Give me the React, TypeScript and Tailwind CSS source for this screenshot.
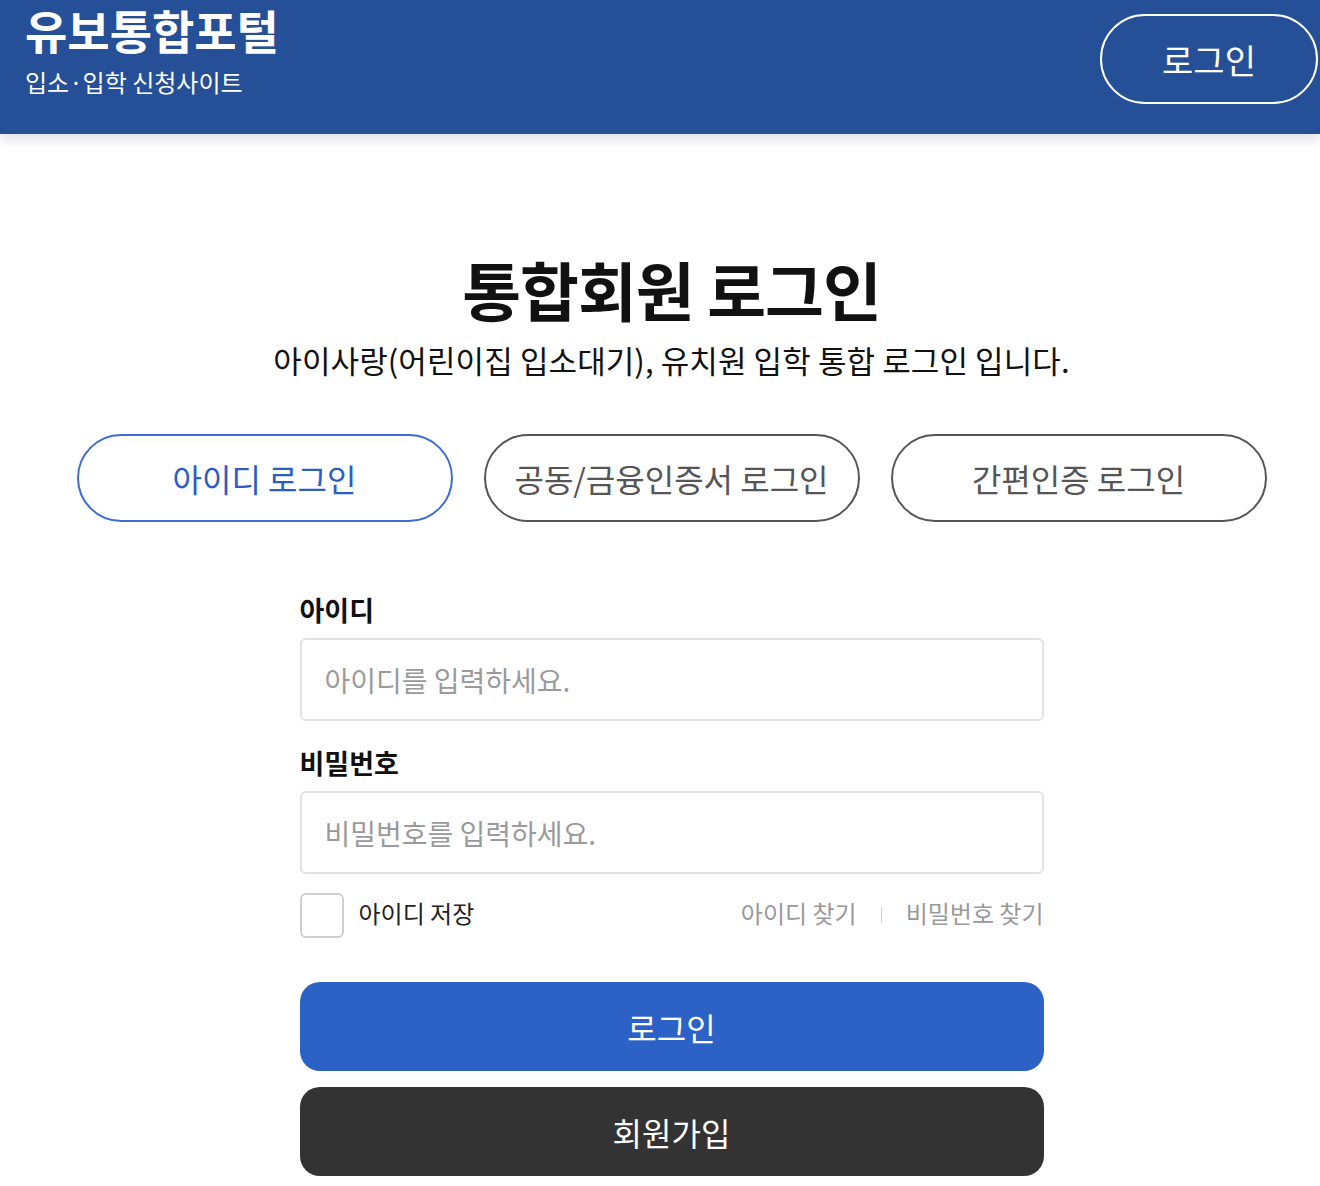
export default function App() {
	return (
		<div className="min-h-[1186px] bg-white font-['Noto_Sans_CJK_KR','Noto_Sans',sans-serif] text-[#111]">
			<header className="relative z-10 flex h-[134px] items-start justify-between bg-[#254f96] pl-[25px] pr-[2px] shadow-[0_6px_12px_rgba(0,0,0,0.12)]">
				<div className="flex flex-col">
					<h1 className="pt-[2px] text-[46px] font-bold leading-[54px] text-white">유보통합포털</h1>
					<p className="mt-[9px] text-[24px] leading-[34px] text-white">입소·입학 신청사이트</p>
				</div>
				<button className="mt-[14px] flex h-[90px] w-[218px] items-center justify-center rounded-full border-2 border-white text-[34px] text-white">
					로그인
				</button>
			</header>

			<main className="flex flex-col items-center pl-[23px]">
				<h2 className="mt-[114px] text-[64px] font-bold leading-[80px] tracking-[-1px]">통합회원 로그인</h2>
				<p className="mt-[10px] text-[31px] leading-[44px] tracking-[0.1px]">
					아이사랑(어린이집 입소대기), 유치원 입학 통합 로그인 입니다.
				</p>

				<div className="mt-[52px] flex gap-[31px]">
					<TabButton label="아이디 로그인" active />
					<TabButton label="공동/금융인증서 로그인" />
					<TabButton label="간편인증 로그인" />
				</div>

				<form className="mt-[68px] flex w-[744px] flex-col">
					<label className="text-[27px] font-bold leading-[40px]">아이디</label>
					<input
						className="mt-[8px] h-[83px] rounded-[6px] border-2 border-[#e2e2e2] px-[23px] text-[28px] outline-none placeholder:text-[#9a9a9a]"
						placeholder="아이디를 입력하세요."
					/>
					<label className="mt-[22px] text-[27px] font-bold leading-[40px]">비밀번호</label>
					<input
						type="password"
						className="mt-[8px] h-[83px] rounded-[6px] border-2 border-[#e2e2e2] px-[23px] text-[28px] outline-none placeholder:text-[#9a9a9a]"
						placeholder="비밀번호를 입력하세요."
					/>

					<div className="mt-[19px] flex items-center justify-between">
						<label className="flex items-center gap-[15px]">
							<span className="h-[45px] w-[44px] shrink-0 rounded-[6px] border-2 border-[#cfcfcf] bg-white" />
							<span className="mt-[-6px] text-[24px] leading-[34px] text-[#222]">아이디 저장</span>
						</label>
						<div className="mt-[-6px] flex items-center text-[24px] leading-[34px] text-[#999]">
							<a>아이디 찾기</a>
							<span className="mx-[24px] mt-[4px] h-[16px] w-px bg-[#cfcfcf]" />
							<a>비밀번호 찾기</a>
						</div>
					</div>

					<button
						type="button"
						className="mt-[44px] h-[89px] rounded-[20px] bg-[#2c62c6] text-[32px] text-white"
					>
						로그인
					</button>
					<button
						type="button"
						className="mt-[16px] h-[89px] rounded-[20px] bg-[#333333] text-[32px] text-white"
					>
						회원가입
					</button>
				</form>
			</main>
		</div>
	);
}

interface TabButtonProps {
	label: string;
	active?: boolean;
}

function TabButton({ label, active }: TabButtonProps) {
	return (
		<button
			className={
				active
					? "flex h-[88px] w-[376px] items-center justify-center rounded-full border-2 border-[#3d6cd2] text-[32px] text-[#2c5cc4]"
					: "flex h-[88px] w-[376px] items-center justify-center rounded-full border-2 border-[#555] text-[32px] text-[#555]"
			}
		>
			{label}
		</button>
	);
}
